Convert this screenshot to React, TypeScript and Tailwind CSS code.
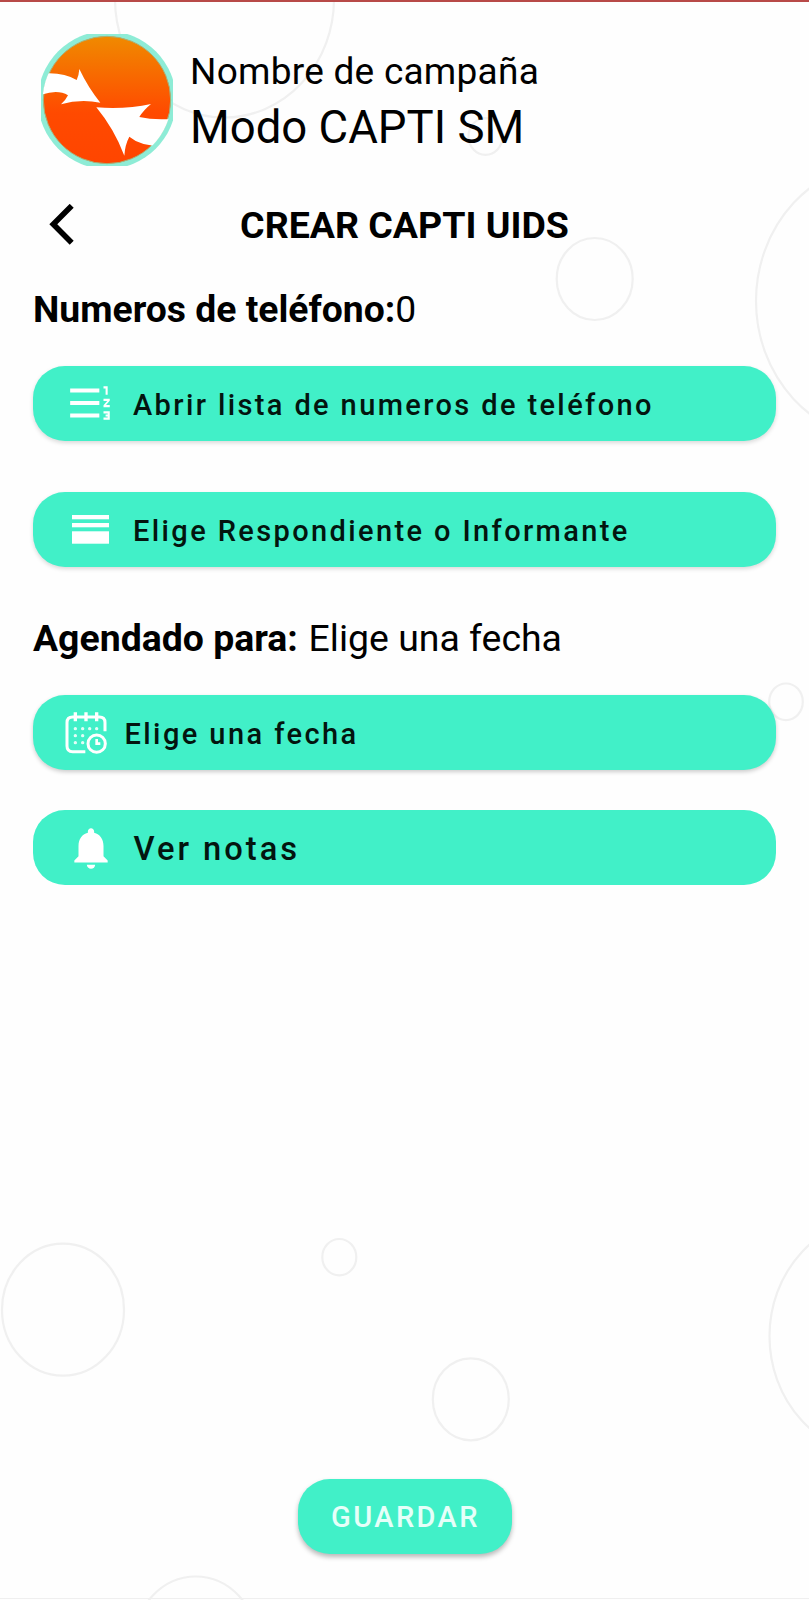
import React from 'react';
import { MdFormatListNumberedRtl, MdNotifications } from 'react-icons/md';

interface Bubble {
  cx: number;
  cy: number;
  rx: number;
  ry: number;
}

const BUBBLES: Bubble[] = [
  { cx: 224.5, cy: -1, rx: 109.5, ry: 118.5 },
  { cx: 485.5, cy: 136.5, rx: 17, ry: 18.3 },
  { cx: 594.7, cy: 279, rx: 38, ry: 41 },
  { cx: 884, cy: 301, rx: 128, ry: 138.5 },
  { cx: 786, cy: 701.8, rx: 16.8, ry: 18.3 },
  { cx: 63, cy: 1309.7, rx: 61, ry: 66 },
  { cx: 339.3, cy: 1257.2, rx: 17, ry: 18.2 },
  { cx: 470.8, cy: 1399.3, rx: 38, ry: 41 },
  { cx: 879.5, cy: 1336.3, rx: 110, ry: 119 },
  { cx: 195.7, cy: 1642.5, rx: 61, ry: 66 },
];

const Bubbles: React.FC = () => (
  <svg className="absolute inset-0 w-full h-full pointer-events-none" viewBox="0 0 809 1600" fill="none">
    {BUBBLES.map((b, i) => (
      <ellipse key={i} cx={b.cx} cy={b.cy} rx={b.rx} ry={b.ry} stroke="#f0f0f0" strokeWidth={2.2} />
    ))}
  </svg>
);

const Logo: React.FC = () => (
  <svg className="w-[132px] h-[132px] shrink-0" viewBox="123 102 396 396">
    <defs>
      <linearGradient id="logoFill" x1="0" y1="0" x2="0" y2="1">
        <stop offset="0" stopColor="#f08a00" />
        <stop offset="0.6" stopColor="#ff4a00" />
        <stop offset="1" stopColor="#ff4500" />
      </linearGradient>
      <clipPath id="logoClip">
        <circle cx="321" cy="300" r="193" />
      </clipPath>
    </defs>
    <circle cx="321" cy="300" r="207" fill="#8eecd6" />
    <circle cx="321" cy="300" r="191" fill="url(#logoFill)" stroke="#a8b078" strokeWidth="3" />
    <g fill="#fff" clipPath="url(#logoClip)">
      <path d="M120 221Q188 214 230 240Q237 224 238 207Q264 262 301 308Q240 296 183 313Q198 299 204 286Q172 266 120 286Z" />
      <path d="M289 322Q380 328 453 312Q430 331 418 351Q464 362 525 356V436Q430 446 388 410Q375 434 373 467Q342 386 289 322Z" />
    </g>
  </svg>
);

const HeadlineIcon: React.FC = () => (
  <svg className="w-[37px] h-[29px]" viewBox="0 0 37 29" fill="#fff">
    <rect width="37" height="4.3" />
    <rect y="8" width="37" height="4.3" />
    <rect y="16.3" width="37" height="12.4" />
  </svg>
);

const CalendarClockIcon: React.FC = () => (
  <svg className="w-[42px] h-[42px]" viewBox="197 335 126 126" fill="none" stroke="#fff" strokeWidth="9">
    <path d="M317 393V367Q317 350 300 350H220Q203 350 203 367V437Q203 454 220 454H258" />
    <path d="M228 336V363M260 336V363M292 336V363" strokeWidth="10" />
    <path
      d="M228 385h.1M250 385h.1M271 385h.1M292 385h.1M228 406h.1M250 406h.1M228 427h.1M250 427h.1"
      strokeWidth="10"
      strokeLinecap="round"
      opacity="0.85"
    />
    <circle cx="292" cy="430" r="26" />
    <path d="M292 416V430H303" strokeWidth="8" />
  </svg>
);

interface ActionButtonProps {
  icon: React.ReactNode;
  iconClass: string;
  label: string;
  labelClass: string;
  className: string;
}

const ActionButton: React.FC<ActionButtonProps> = ({ icon, iconClass, label, labelClass, className }) => (
  <button
    className={`flex h-[75px] w-full items-center rounded-[32px] bg-[#41f0c8] text-left font-medium text-[#03150f] ${className}`}
  >
    <span className={`flex shrink-0 items-center ${iconClass}`}>{icon}</span>
    <span className={`whitespace-nowrap ${labelClass}`}>{label}</span>
  </button>
);

export default function App() {
  return (
    <div className="relative flex h-[1600px] w-[809px] flex-col overflow-hidden bg-[#fefefe] font-[Roboto,sans-serif] text-black">
      <Bubbles />
      <div className="relative h-0.5 w-full bg-[#b84a48]" />

      <div className="relative flex flex-1 flex-col px-[33px]">
        {/* Campaign header */}
        <header className="flex pt-8 pl-2">
          <Logo />
          <div className="ml-[17px] pt-[13px] whitespace-nowrap">
            <p className="text-[37px] leading-[50px] tracking-[0.25px]">Nombre de campaña</p>
            <p className="mt-px text-[45.5px] leading-[60px]">Modo CAPTI SM</p>
          </div>
        </header>

        <div className="mt-[34px] grid h-[50px] grid-cols-[60px_1fr_60px] items-center">
          <button aria-label="Volver" className="pl-[15px]">
            <svg className="h-[42px] w-7" viewBox="0 0 28 42" fill="none" stroke="#000" strokeWidth="5.6">
              <path d="M23.7 1.8L5.3 20.3L23.7 38.8" />
            </svg>
          </button>
          <h1 className="text-center text-[37.5px] leading-[50px] font-bold whitespace-nowrap">CREAR CAPTI UIDS</h1>
        </div>

        <p className="mt-[34px] text-[37.3px] leading-[50px] whitespace-nowrap">
          <b className="font-bold">Numeros de teléfono:</b>0
        </p>

        <ActionButton
          icon={<MdFormatListNumberedRtl size={50} />}
          iconClass="ml-[33px] w-[67px] pb-px text-white"
          label="Abrir lista de numeros de teléfono"
          labelClass="pt-1 text-[29px] tracking-[2.38px]"
          className="mt-8 shadow-[0_2px_4px_rgba(0,0,0,0.15)]"
        />
        <ActionButton
          icon={<HeadlineIcon />}
          iconClass="ml-[39px] w-[61px]"
          label="Elige Respondiente o Informante"
          labelClass="pt-1 text-[29px] tracking-[2.38px]"
          className="mt-[51px] shadow-[0_2px_4px_rgba(0,0,0,0.15)]"
        />

        <p className="mt-[46px] text-[37.4px] leading-[50px] whitespace-nowrap">
          <b className="mr-[1.5px] font-bold">Agendado para:</b> Elige una fecha
        </p>

        <ActionButton
          icon={<CalendarClockIcon />}
          iconClass="ml-8 w-[59.5px]"
          label="Elige una fecha"
          labelClass="pt-1 text-[29px] tracking-[2.42px]"
          className="mt-8 shadow-[0_2px_4px_rgba(0,0,0,0.2)]"
        />
        <ActionButton
          icon={<MdNotifications size={50} />}
          iconClass="ml-[32.5px] w-[68px] text-white"
          label="Ver notas"
          labelClass="pt-1 text-[32.7px] tracking-[3px]"
          className="mt-10"
        />

        <button className="mt-auto mb-[46.5px] h-[75px] w-[214px] self-center rounded-[32px] bg-[#41f0c8] pt-1 pl-[2px] text-[29px] font-medium tracking-[2.4px] text-[#e6fff9] shadow-[0_3px_5px_rgba(0,0,0,0.28)]">
          GUARDAR
        </button>
      </div>

      <div className="absolute bottom-px left-0 h-px w-full bg-[#efefef]" />
    </div>
  );
}
